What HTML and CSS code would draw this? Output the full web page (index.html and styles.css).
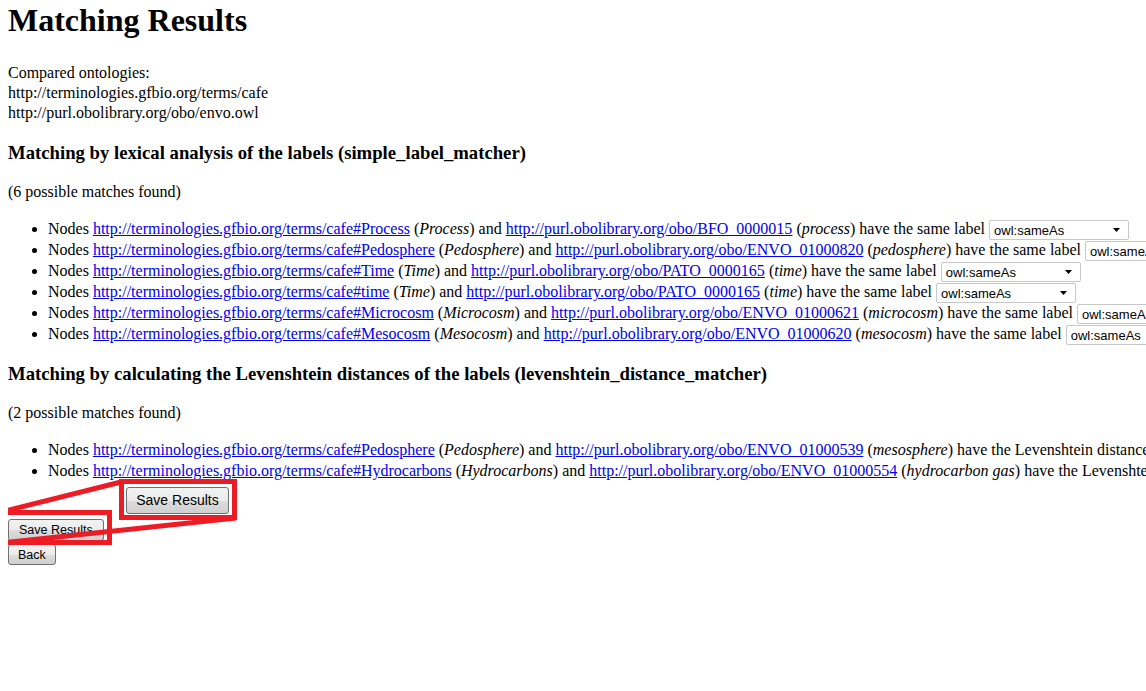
FILE: index.html
```html
<!DOCTYPE html>
<html>
<head>
<meta charset="utf-8">
<title>Matching Results</title>
<link rel="stylesheet" href="styles.css">
</head>
<body>
<h1 class="title">Matching Results</h1>
<p class="ontologies">Compared ontologies:<br>http://terminologies.gfbio.org/terms/cafe<br>http://purl.obolibrary.org/obo/envo.owl</p>

<h3 class="section">Matching by lexical analysis of the labels (simple_label_matcher)</h3>
<p class="count">(6 possible matches found)</p>
<ul class="matches">
  <li>Nodes <a href="#">http://terminologies.gfbio.org/terms/cafe#Process</a> (<i>Process</i>) and <a href="#">http://purl.obolibrary.org/obo/BFO_0000015</a> (<i>process</i>) have the same label <select class="rel"><option>owl:sameAs</option></select></li>
  <li>Nodes <a href="#">http://terminologies.gfbio.org/terms/cafe#Pedosphere</a> (<i>Pedosphere</i>) and <a href="#">http://purl.obolibrary.org/obo/ENVO_01000820</a> (<i>pedosphere</i>) have the same label <select class="rel"><option>owl:sameAs</option></select></li>
  <li>Nodes <a href="#">http://terminologies.gfbio.org/terms/cafe#Time</a> (<i>Time</i>) and <a href="#">http://purl.obolibrary.org/obo/PATO_0000165</a> (<i>time</i>) have the same label <select class="rel"><option>owl:sameAs</option></select></li>
  <li>Nodes <a href="#">http://terminologies.gfbio.org/terms/cafe#time</a> (<i>Time</i>) and <a href="#">http://purl.obolibrary.org/obo/PATO_0000165</a> (<i>time</i>) have the same label <select class="rel"><option>owl:sameAs</option></select></li>
  <li>Nodes <a href="#">http://terminologies.gfbio.org/terms/cafe#Microcosm</a> (<i>Microcosm</i>) and <a href="#">http://purl.obolibrary.org/obo/ENVO_01000621</a> (<i>microcosm</i>) have the same label <select class="rel"><option>owl:sameAs</option></select></li>
  <li>Nodes <a href="#">http://terminologies.gfbio.org/terms/cafe#Mesocosm</a> (<i>Mesocosm</i>) and <a href="#">http://purl.obolibrary.org/obo/ENVO_01000620</a> (<i>mesocosm</i>) have the same label <select class="rel"><option>owl:sameAs</option></select></li>
</ul>

<h3 class="section">Matching by calculating the Levenshtein distances of the labels (levenshtein_distance_matcher)</h3>
<p class="count">(2 possible matches found)</p>
<ul class="matches">
  <li>Nodes <a href="#">http://terminologies.gfbio.org/terms/cafe#Pedosphere</a> (<i>Pedosphere</i>) and <a href="#">http://purl.obolibrary.org/obo/ENVO_01000539</a> (<i>mesosphere</i>) have the Levenshtein distance</li>
  <li>Nodes <a href="#">http://terminologies.gfbio.org/terms/cafe#Hydrocarbons</a> (<i>Hydrocarbons</i>) and <a href="#">http://purl.obolibrary.org/obo/ENVO_01000554</a> (<i>hydrocarbon gas</i>) have the Levenshte</li>
</ul>

<div class="actions">
  <button class="btn" type="button">Save Results</button>
  <button class="btn btn-back" type="button">Back</button>
</div>

<div class="callout">
  <svg class="callout-lines" width="260" height="80" viewBox="0 0 260 80">
    <polyline points="1,33 121,3" fill="none" stroke="#ed1c24" stroke-width="5"/>
    <polyline points="0,64 236,39" fill="none" stroke="#ed1c24" stroke-width="5"/>
    <rect x="3.5" y="33.5" width="106" height="30" fill="none" stroke="#ed1c24" stroke-width="5"/>
    <rect x="121.5" y="2.5" width="113" height="36" fill="none" stroke="#ed1c24" stroke-width="5"/>
  </svg>
  <span class="btn btn-zoom">Save Results</span>
</div>
</body>
</html>
```
FILE: styles.css
```css
html {
  overflow: hidden;
}
body {
  margin: 0 0 0 8px;
  font-family: "Liberation Serif", "Times New Roman", serif;
  font-size: 16px;
  color: #000;
  background: #fff;
  white-space: nowrap;
  position: relative;
}
.title {
  font-size: 32px;
  font-weight: bold;
  margin: 2px 0 24px;
}
.ontologies {
  margin: 0;
  line-height: 20px;
}
.section {
  font-size: 18.72px;
  margin: 19px 0 19px;
}
.count {
  margin: 0 0 17px;
}
.matches {
  margin: 0 0 18px;
  padding-left: 40px;
}
.matches li {
  line-height: 21px;
  height: 21px;
}
a {
  color: #0000ee;
}
.rel {
  -webkit-appearance: none;
  appearance: none;
  font-family: "Liberation Sans", Arial, sans-serif;
  font-size: 13px;
  width: 140px;
  height: 20px;
  padding: 0 4px;
  border: 1px solid #c8c8c8;
  border-radius: 2px;
  background: #fff url("data:image/svg+xml,%3Csvg xmlns='http://www.w3.org/2000/svg' width='8' height='4'%3E%3Cpath d='M0 0h7l-3.5 4z' fill='%23000'/%3E%3C/svg%3E") no-repeat right 7px center;
  vertical-align: middle;
  color: #000;
  margin: 0;
}
.actions {
  display: flex;
  flex-direction: column;
  align-items: flex-start;
  gap: 3px;
  padding-top: 20px;
}
.btn {
  font-family: "Liberation Sans", Arial, sans-serif;
  font-size: 12.5px;
  color: #000;
  height: 22px;
  padding: 0 10px;
  border: 1px solid #707070;
  border-radius: 3px;
  background: linear-gradient(#f2f2f2 0%, #ebebeb 50%, #dddddd 51%, #cfcfcf 100%);
  line-height: 20px;
  margin: 0;
}
.btn-back {
  height: 21px;
  padding: 0 9px;
}
.callout {
  position: absolute;
  left: -8px;
  top: 479px;
  width: 260px;
  height: 80px;
  pointer-events: none;
}
.callout-lines {
  position: absolute;
  left: 0;
  top: 0;
}
.btn-zoom {
  position: absolute;
  left: 126px;
  top: 8px;
  width: 103px;
  height: 27px;
  box-sizing: border-box;
  padding: 0;
  text-align: center;
  font-size: 14px;
  line-height: 25px;
  display: block;
}
```
